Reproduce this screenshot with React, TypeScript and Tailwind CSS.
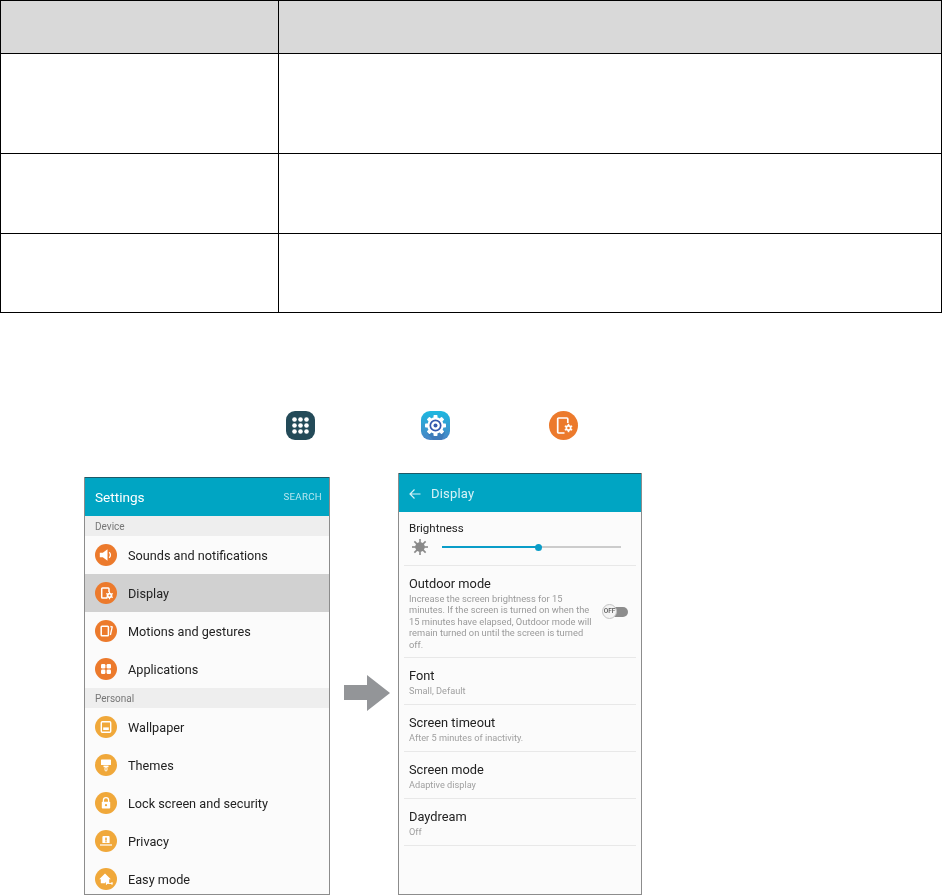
const font = "[font-family:Roboto,sans-serif]";

function Circle({ color, children }: { color: string; children: React.ReactNode }) {
  return (
    <svg width="22" height="22" viewBox="0 0 22 22" className="shrink-0">
      <circle cx="11" cy="11" r="11" fill={color} />
      {children}
    </svg>
  );
}

const orange = "#ec7a2c";
const yellow = "#f0a83a";

const DeviceGear = ({ bg }: { bg: string }) => (
  <>
    <path d="M12.500 16H7.500a.8.8 0 0 1-.8-.8V6.800a.8.8 0 0 1 .8-.8h5.700a.8.8 0 0 1 .8.8V10" fill="none" stroke="#fff" strokeWidth="1.500" />
    <circle cx="14.500" cy="13.500" r="2.800" fill="#fff" />
    {[0, 60, 120].map((a) => (
      <rect key={a} x="13.900" y="9.700" width="1.200" height="7.600" fill="#fff" transform={`rotate(${a} 14.500 13.500)`} />
    ))}
    <circle cx="14.500" cy="13.500" r="1" fill={bg} />
  </>
);

const settingsRows = [
  {
    label: "Sounds and notifications",
    color: orange,
    icon: (
      <>
        <path d="M4.800 8.700h3l4.700-3.400v11.400l-4.700-3.400h-3z" fill="#fff" />
        <path d="M14.200 8.200a3.800 3.800 0 0 1 0 5.600" fill="none" stroke="#fff" strokeWidth="1.300" />
      </>
    ),
  },
  { label: "Display", color: orange, active: true, icon: <DeviceGear bg={orange} /> },
  {
    label: "Motions and gestures",
    color: orange,
    icon: (
      <>
        <rect x="6.200" y="6.200" width="7.200" height="9.600" rx="0.8" fill="none" stroke="#fff" strokeWidth="1.500" />
        <path d="M15.400 6.500l1.800.5-1.800 8" fill="none" stroke="#fff" strokeWidth="1.300" />
      </>
    ),
  },
  {
    label: "Applications",
    color: orange,
    icon: (
      <>
        <rect x="6" y="6" width="4.400" height="4.400" rx="1.200" fill="#fff" />
        <rect x="11.600" y="6" width="4.400" height="4.400" rx="1.200" fill="#fff" />
        <rect x="6" y="11.600" width="4.400" height="4.400" rx="1.200" fill="#fff" />
        <rect x="11.600" y="11.600" width="4.400" height="4.400" rx="1.200" fill="#fff" />
      </>
    ),
  },
];

const personalRows = [
  {
    label: "Wallpaper",
    color: yellow,
    icon: (
      <>
        <rect x="6.300" y="5.800" width="9.400" height="10.400" rx="1" fill="none" stroke="#fff" strokeWidth="1.400" />
        <rect x="8.200" y="11.400" width="5.600" height="2.600" fill="#fff" />
      </>
    ),
  },
  {
    label: "Themes",
    color: yellow,
    icon: (
      <>
        <rect x="6" y="5.500" width="10" height="5.500" rx="0.6" fill="#fff" />
        <rect x="8.500" y="11.600" width="5" height="1.600" fill="#fff" />
        <rect x="10" y="13" width="2" height="4" rx="1" fill="none" stroke="#fff" strokeWidth="0.9" />
      </>
    ),
  },
  {
    label: "Lock screen and security",
    color: yellow,
    icon: (
      <>
        <path d="M8.400 10V8.200a2.600 2.600 0 0 1 5.200 0V10" fill="none" stroke="#fff" strokeWidth="1.300" />
        <rect x="6.800" y="9.800" width="8.400" height="6.800" rx="0.8" fill="#fff" />
        <circle cx="11" cy="13.200" r="1.100" fill={yellow} />
      </>
    ),
  },
  {
    label: "Privacy",
    color: yellow,
    icon: (
      <>
        <path d="M7.400 13V7a1 1 0 0 1 1-1h5.200a1 1 0 0 1 1 1v6z" fill="#fff" />
        <rect x="10.200" y="7.600" width="1.600" height="3" fill={yellow} />
        <rect x="10.200" y="11.200" width="1.600" height="1.100" fill={yellow} />
        <rect x="5" y="14.400" width="12" height="1.200" fill="#fff" />
      </>
    ),
  },
  {
    label: "Easy mode",
    color: yellow,
    icon: (
      <>
        <path d="M4.200 11.200L10 5.600l5.800 5.600h-1.600v4H5.800v-4z" fill="#fff" />
        <path d="M11 15.400h6.400M11.400 14v2.800M17 14v2.800" stroke="#fff" strokeWidth="1" fill="none" />
        <path d="M10 15.400h.6" stroke={yellow} strokeWidth="2.400" fill="none" />
      </>
    ),
  },
];

function SettingRow({ row }: { row: (typeof settingsRows)[number] }) {
  return (
    <div className={`h-[38px] shrink-0 flex items-center pl-[10px] gap-[11px] ${row.active ? "bg-[#d1d1d1]" : ""}`}>
      <Circle color={row.color}>{row.icon}</Circle>
      <span className="mt-[2px] text-[12.700px] text-[#222]">{row.label}</span>
    </div>
  );
}

function Strip({ label }: { label: string }) {
  return (
    <div className="h-[20px] shrink-0 bg-[#eeeeee] pl-[10px] flex items-center text-[10px] text-[#777]">
      {label}
    </div>
  );
}

const displayRows = [
  { title: "Font", sub: "Small, Default" },
  { title: "Screen timeout", sub: "After 5 minutes of inactivity." },
  { title: "Screen mode", sub: "Adaptive display" },
  { title: "Daydream", sub: "Off" },
];

export default function App() {
  return (
    <div className={`w-[942px] h-[895px] bg-white overflow-hidden ${font}`}>
      {/* Table, text is blank in the source */}
      <div className="border-l border-t border-black">
        {[
          "h-[53px] bg-[#d9d9d9]",
          "h-[100px]",
          "h-[80px]",
          "h-[79px]",
        ].map((cls) => (
          <div key={cls} className={`flex border-b border-black ${cls}`}>
            <div className="w-[278px] border-r border-black" />
            <div className="flex-1 border-r border-black" />
          </div>
        ))}
      </div>

      {/* Path icons */}
      <div className="mt-[98px] ml-[286px] h-[29px] flex blur-[0.3px]">
        <svg width="29" height="29" viewBox="0 0 29 29">
          <rect width="29" height="29" rx="9" fill="#234a58" />
          {[8.500, 14.500, 20.500].map((y) =>
            [8.500, 14.500, 20.500].map((x) => <circle key={`${x}-${y}`} cx={x} cy={y} r="2.300" fill="#fff" />)
          )}
        </svg>
        <svg width="29" height="29" viewBox="0 0 29 29" className="ml-[106px]">
          <defs>
            <linearGradient id="gearBg" x1="0" y1="0" x2="0" y2="1">
              <stop offset="0" stopColor="#1db8e0" />
              <stop offset="1" stopColor="#4a84c4" />
            </linearGradient>
          </defs>
          <rect width="29" height="29" rx="9" fill="url(#gearBg)" />
          <path d="M14.500 14.500L24 21l-3 8h-9l-6-7z" fill="#3a6fae" opacity="0.55" />
          <circle cx="14.500" cy="14.500" r="8.200" fill="#fff" />
          {[0, 45, 90, 135].map((a) => (
            <rect key={a} x="12.500" y="4" width="4" height="21" rx="0.8" fill="#fff" transform={`rotate(${a} 14.500 14.500)`} />
          ))}
          <circle cx="14.500" cy="14.500" r="5.200" fill="none" stroke="#3559ad" strokeWidth="1.700" />
          <circle cx="14.500" cy="14.500" r="2" fill="#3559ad" />
        </svg>
        <svg width="29" height="29" viewBox="0 0 29 29" className="ml-[99px]">
          <circle cx="14.500" cy="14.500" r="14.500" fill="#ec7a2c" />
          <path d="M15.500 22H9.600a.9.9 0 0 1-.9-.9V7.900a.9.9 0 0 1 .9-.9h8.300a.9.9 0 0 1 .9.900V12" fill="none" stroke="#fff" strokeWidth="1.700" />
          <circle cx="19.500" cy="17" r="3" fill="#fff" />
          {[0, 60, 120].map((a) => (
            <rect key={a} x="18.700" y="12.800" width="1.600" height="8.400" fill="#fff" transform={`rotate(${a} 19.500 17)`} />
          ))}
          <circle cx="19.500" cy="17" r="1.300" fill="#ec7a2c" />
        </svg>
      </div>

      {/* Screens */}
      <div className="mt-[33px] h-[422px] flex items-end">
        {/* Settings */}
        <div className="ml-[84px] w-[246px] h-[418px] flex flex-col border-x border-b border-[#8c8c8c] bg-[#fbfbfb] overflow-hidden blur-[0.4px]">
          <div className="h-[39px] shrink-0 bg-[#00a5c3] border-t border-[#1d5a68] flex items-center justify-between pl-[10px] pr-[7px] text-white">
            <span className="text-[13.600px]">Settings</span>
            <span className="text-[9.700px] tracking-[0.3px] text-[#b5e6ef]">SEARCH</span>
          </div>
          <Strip label="Device" />
          {settingsRows.map((row) => (
            <SettingRow key={row.label} row={row} />
          ))}
          <Strip label="Personal" />
          {personalRows.map((row) => (
            <SettingRow key={row.label} row={row as (typeof settingsRows)[number]} />
          ))}
        </div>

        {/* Arrow */}
        <svg width="46" height="36" viewBox="0 0 46 36" className="ml-[14px] self-start mt-[202px]">
          <path d="M0 10h23V0l23 18-23 18V25H0z" fill="#939598" />
        </svg>

        {/* Display */}
        <div className="ml-[8px] w-[244px] h-[422px] flex flex-col border-x border-b border-[#8c8c8c] bg-[#fbfbfb] overflow-hidden blur-[0.4px]">
          <div className="h-[39px] shrink-0 bg-[#00a5c3] border-t border-[#1d5a68] flex items-center pl-[10px] gap-[10px] text-[#d5f2f7]">
            <svg width="12" height="12" viewBox="0 0 12 12" fill="none" stroke="currentColor" strokeWidth="1.200" className="mt-[1px]">
              <path d="M11.500 6H1M5.500 1.500L1 6l4.500 4.500" />
            </svg>
            <span className="mt-[2px] text-[13px] tracking-[0.2px]">Display</span>
          </div>

          <div className="mx-[5px] h-[54px] shrink-0 border-b border-[#e8e8e8] pl-[5px] pt-[9px] flex flex-col">
            <span className="text-[11.500px] leading-[15px] text-[#222]">Brightness</span>
            <div className="flex items-center mt-[3px]">
              <svg width="16" height="16" viewBox="0 0 16 16" className="ml-[3px]">
                <circle cx="8" cy="8" r="4.800" fill="#8a8a8a" />
                {[0, 45, 90, 135].map((a) => (
                  <rect key={a} x="7.200" y="0" width="1.600" height="16" fill="#8a8a8a" transform={`rotate(${a} 8 8)`} />
                ))}
              </svg>
              <div className="ml-[14px] w-[179px] h-[2px] flex items-center bg-[#cccccc]">
                <div className="w-[96px] h-[2px] bg-[#0a9dc8]" />
                <div className="w-[7px] h-[7px] rounded-full bg-[#0a9dc8] -ml-[3px]" />
              </div>
            </div>
          </div>

          <div className="mx-[5px] h-[92px] shrink-0 border-b border-[#e8e8e8] pl-[5px] pt-[9px] flex">
            <div className="w-[190px] shrink-0">
              <div className="text-[12.800px] leading-[17px] text-[#222]">Outdoor mode</div>
              <div className="mt-[1px] text-[9.300px] leading-[11.400px] text-[#9a9a9a] whitespace-nowrap">
                Increase the screen brightness for 15
                <br />
                minutes. If the screen is turned on when the
                <br />
                15 minutes have elapsed, Outdoor mode will
                <br />
                remain turned on until the screen is turned
                <br />
                off.
              </div>
            </div>
            <div className="relative ml-[3px] mt-[29px] w-[26px] h-[15px] flex items-center">
              <div className="ml-[8px] w-[18px] h-[10px] rounded-full bg-[#8d8d8d]" />
              <div className="absolute left-0 top-0 w-[15px] h-[15px] rounded-full bg-[#f4f4f4] border border-[#c4c4c4] flex items-center justify-center text-[6.500px] font-medium text-[#555]">
                OFF
              </div>
            </div>
          </div>

          {displayRows.map((row) => (
            <div key={row.title} className="mx-[5px] h-[47px] shrink-0 border-b border-[#e8e8e8] pl-[5px] pt-[9px]">
              <div className="text-[12.800px] leading-[17px] text-[#222]">{row.title}</div>
              <div className="text-[9.200px] leading-[13px] text-[#a0a0a0]">{row.sub}</div>
            </div>
          ))}
        </div>
      </div>
    </div>
  );
}
